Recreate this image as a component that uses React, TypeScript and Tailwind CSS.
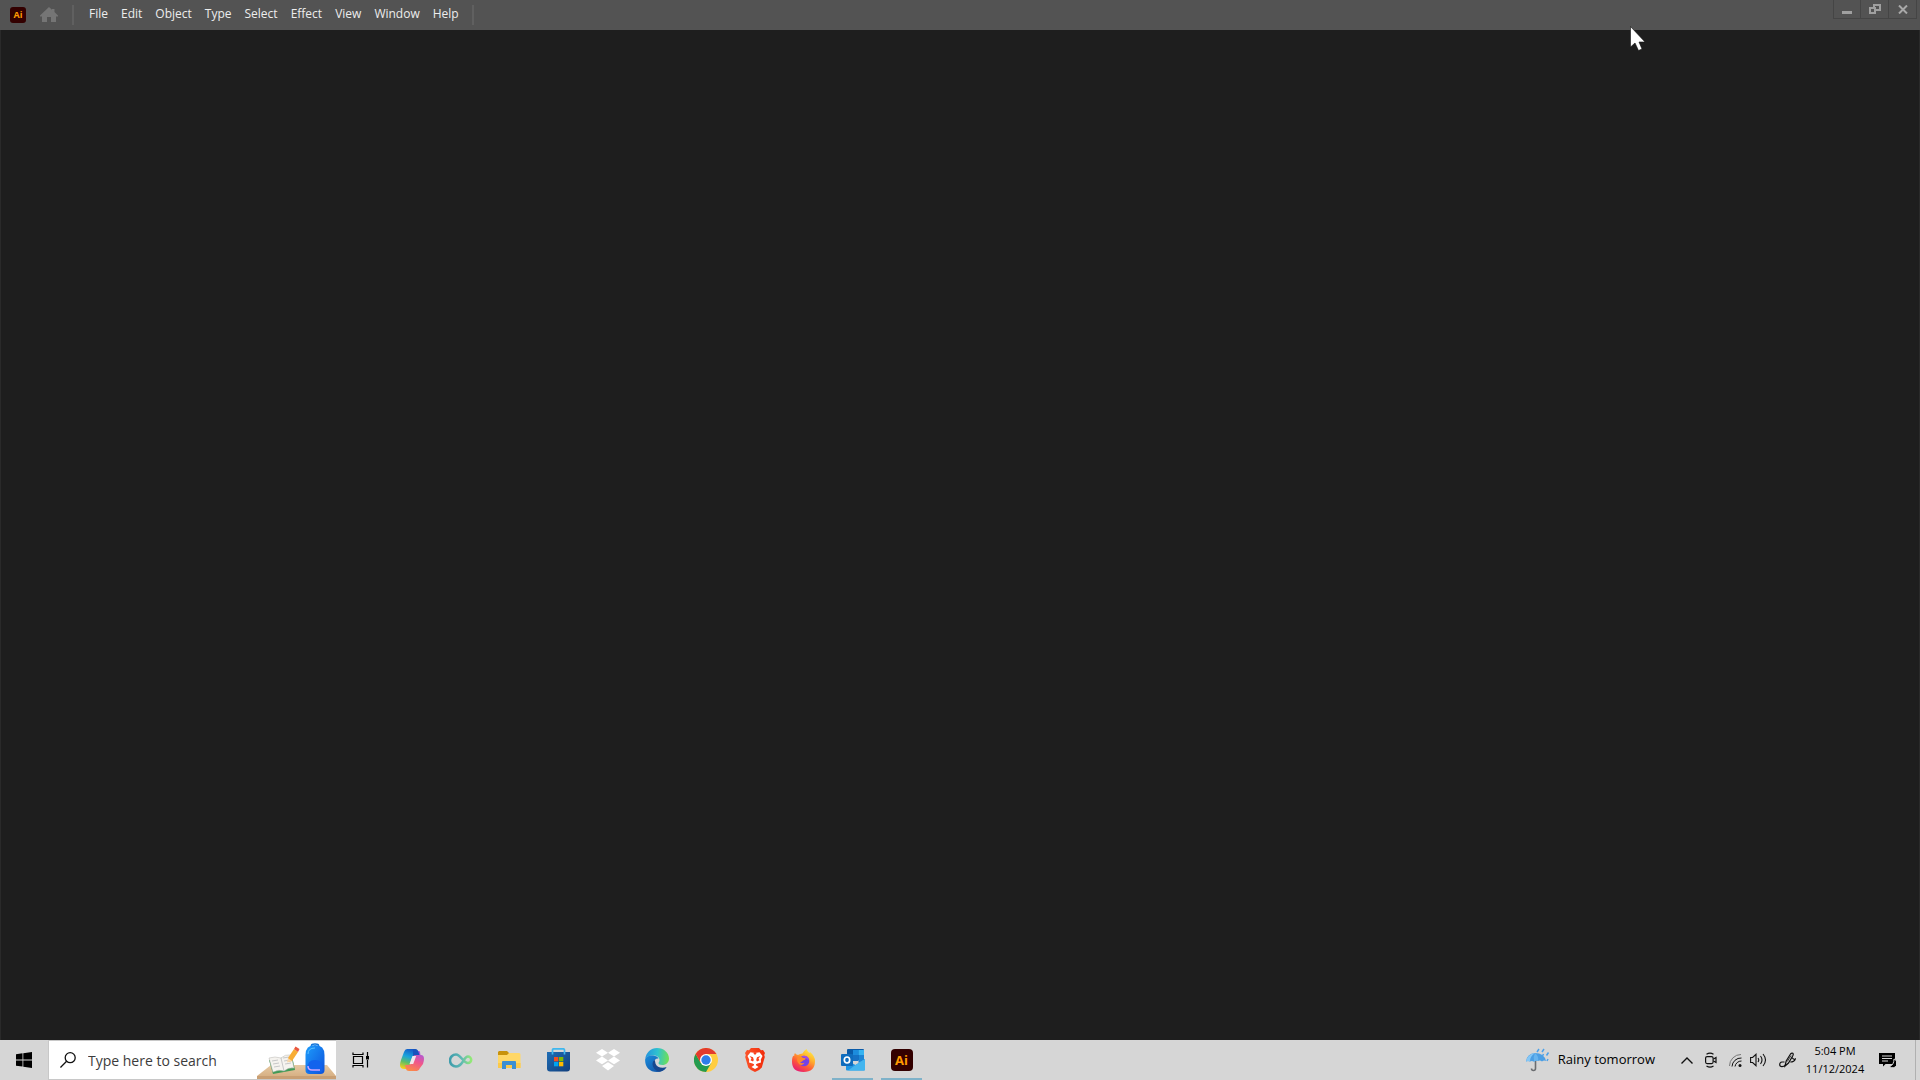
import type { ReactNode } from "react";

const menus = ["File", "Edit", "Object", "Type", "Select", "Effect", "View", "Window", "Help"];

const HomeIcon = () => (
  <svg width="18" height="16" viewBox="0 0 18 16" fill="#757575">
    <path d="M9 0 12 2.700V2h2.500v3L18 8.500v1h-2V15h-5v-5H7v5H2V9.500H0v-1z" />
  </svg>
);

const Pointer = () => (
  <svg width="16" height="25" viewBox="0 0 16 25" className="pointer-events-none absolute top-[26px] left-[1630px]">
    <path d="M.5.5V21L5 17l3.500 7.500L12 23l-3-7h6z" fill="#fff" stroke="#111" strokeWidth=".6" />
  </svg>
);

const WindowsLogo = () => (
  <svg width="16" height="16" viewBox="0 0 16 16">
    <path d="M0 2.200 6.500 1.300V7.500H0zM7.300 1.200 16 0v7.500H7.300zM0 8.400h6.500v6.200L0 13.700zM7.300 8.400H16V16l-8.700-1.300z" />
  </svg>
);

const SearchIcon = () => (
  <svg width="16" height="16" viewBox="0 0 16 16" fill="none" stroke="#111" strokeWidth="1.300">
    <circle cx="10.200" cy="5.700" r="5" />
    <path d="M6.600 9.300.4 15.500" />
  </svg>
);

const SchoolArt = () => (
  <svg width="79" height="38" viewBox="0 0 79 38" className="shrink-0 self-end">
    <defs>
      <linearGradient id="bag" x1="0" y1="0" x2="1" y2="1">
        <stop offset="0" stopColor="#1d9dfc" />
        <stop offset="1" stopColor="#0d52dc" />
      </linearGradient>
      <linearGradient id="desk" x1="0" y1="0" x2="0" y2="1">
        <stop offset="0" stopColor="#e6c9a3" />
        <stop offset="1" stopColor="#d3aa7c" />
      </linearGradient>
    </defs>
    <path d="M14 24h56l9 11v3H0v-3z" fill="url(#desk)" />
    <path d="M0 35h79v3H0z" fill="#c99f73" />
    <path d="m12 19 4 14 22-4-3-14z" fill="#3f9a55" />
    <path d="m12 17 4 14q6-3 11-1 5-4 10-3l-3-13q-6-1-10 3-6-2-12 0z" fill="#f5f3ef" stroke="#b9b7b2" strokeWidth=".5" />
    <path d="m24 17 3 13M15 20l6-1m-5 4 6-1m-5 4 6-1m3-8 6-1m-5 4 6-1m-5 4 6-1" stroke="#b3b5b8" fill="none" strokeWidth=".7" />
    <path d="m31 17 6-9 4 3-6 9-4 1z" fill="#f8ad35" />
    <path d="m31 17-1 4.500 5-1.500z" fill="#f6d7ae" />
    <path d="m37 8 1.500-2.500 4 2.500-1.500 3z" fill="#e9573f" />
    <g transform="translate(0 2)">
      <path d="M54.500 4V2.500Q54.500 1 58 1t3.500 1.500V4" fill="none" stroke="#1273d8" strokeWidth="1.600" />
      <path d="M48.500 12q0-10 9.500-10t9.500 10v15q0 4-4 4h-11q-4 0-4-4z" fill="url(#bag)" />
      <path d="M50.500 25q0-8 7.500-8t7.500 8v2q0 2-2 2h-11q-2 0-2-2z" fill="#1263ed" />
      <path d="M51 23q0 4 4 4h8" stroke="#c9a7ff" fill="none" strokeWidth="1.500" />
      <path d="M51 11q0-6 7-6" stroke="#5cc2ff" fill="none" />
    </g>
  </svg>
);

const TaskViewIcon = () => (
  <svg width="17" height="16" viewBox="0 0 17 16" fill="none" stroke="#000" strokeWidth="1.200">
    <path d="M1.500 4.500h9v7h-9zM1 .5v2h10v-2M1 15.500v-2h10v2M15.500 0v4M15.500 8v7.500" />
    <path d="M14 4h3v3.500h-3z" fill="#000" stroke="none" />
  </svg>
);

const CopilotIcon = () => (
  <svg width="24" height="22" viewBox="0 0 24 22">
    <defs>
      <linearGradient id="cpA" x1=".6" y1="0" x2=".3" y2="1">
        <stop offset="0" stopColor="#1557c7" />
        <stop offset=".4" stopColor="#18a4dc" />
        <stop offset=".7" stopColor="#62bf63" />
        <stop offset="1" stopColor="#f4cf1b" />
      </linearGradient>
      <linearGradient id="cpB" x1=".7" y1="0" x2=".3" y2="1">
        <stop offset="0" stopColor="#a359e4" />
        <stop offset=".5" stopColor="#f0568c" />
        <stop offset="1" stopColor="#fb8a47" />
      </linearGradient>
    </defs>
    <path d="M7 0h8q2.500 0 3.300 2.600L19.500 6H16q-3 0-4 3l-2.500 8q-1 3-3.500 3H4.500Q0 20 0 16q0-2 1-5L4 3Q5 0 7 0z" fill="url(#cpA)" />
    <path d="M17 22H9q-2.500 0-3.300-2.600L5 16h3q3 0 4-3l2.500-8q.8-3 3.500-3 2-.2 2 1l.5 3H21q3 0 3 4 0 2-1 5l-3 4q-1 3-3 3z" fill="url(#cpB)" />
    <path d="M13 0h2q2.500 0 3.300 2.600L19.500 6H16q-2 0-3 1z" fill="#1854bd" />
    <path d="M12.500 7h3.700l-3 8H9.500z" fill="#f1e8ee" />
  </svg>
);

const InfinityIcon = () => (
  <svg width="24" height="15" viewBox="0 0 24 15" fill="none">
    <defs>
      <linearGradient id="inf" x1="0" y1="0" x2="1" y2="0">
        <stop offset="0" stopColor="#3f9dac" />
        <stop offset=".55" stopColor="#5fb9b4" />
        <stop offset="1" stopColor="#93ea75" />
      </linearGradient>
    </defs>
    <path
      d="M14 8.500C11 13 9.500 13.500 7 13.500a6 6 0 1 1 0-12c5 0 7 8.500 12 8.500a3.200 3.200 0 1 0 0-6.400c-2.200 0-3.500 2.400-5 4.900z"
      stroke="url(#inf)"
      strokeWidth="2.500"
    />
  </svg>
);

const FolderIcon = () => (
  <svg width="23" height="18" viewBox="0 0 23 18">
    <path d="M1 0h8l2 2h10v4H0V1z" fill="#c8920b" />
    <path d="M0 4h9l2-2h10q1.500 0 1.500 1.500V17H0z" fill="#ffd766" />
    <path d="M0 12h22.500v5H0z" fill="#fbc94a" />
    <path d="M4 18v-7q0-1 1-1h12q1 0 1 1v7h-4v-4H8v4z" fill="#3b8fd3" />
  </svg>
);

const StoreIcon = () => (
  <svg width="23" height="24" viewBox="0 0 23 24">
    <defs>
      <linearGradient id="store" x1="0" y1="0" x2="1" y2="1">
        <stop offset="0" stopColor="#1e6db5" />
        <stop offset="1" stopColor="#123f7d" />
      </linearGradient>
    </defs>
    <path d="M0 4h23v16.500q0 3-3 3H3q-3 0-3-3z" fill="url(#store)" />
    <path d="M5.500 6.500V2q0-1.200 1.200-1.200h9.600q1.200 0 1.200 1.200v4.500" fill="none" stroke="#3fb7ee" strokeWidth="1.700" />
    <path d="M7 9h4.300v4.300H7z" fill="#f25022" />
    <path d="M12 9h4.300v4.300H12z" fill="#7fba00" />
    <path d="M7 14h4.300v4.300H7z" fill="#00a4ef" />
    <path d="M12 14h4.300v4.300H12z" fill="#ffb900" />
  </svg>
);

const DropboxIcon = () => (
  <svg width="24" height="22" viewBox="0 0 24 22" fill="#fff">
    <path d="m6 0 6 3.700-6 3.900-6-3.900zM18 0l6 3.700-6 3.900-6-3.900zM6 7.600l6 3.800-6 3.800-6-3.800zM18 7.600l6 3.800-6 3.800-6-3.800zM6 17l6-3.800 6 3.800-6 4.500z" />
  </svg>
);

const EdgeIcon = () => (
  <svg width="24" height="24" viewBox="0 0 24 24">
    <defs>
      <linearGradient id="edgeTop" x1="0" y1=".4" x2="1" y2=".5">
        <stop offset="0" stopColor="#2393df" />
        <stop offset=".5" stopColor="#2fc2cf" />
        <stop offset="1" stopColor="#6fe055" />
      </linearGradient>
      <linearGradient id="edgeLow" x1="0" y1="0" x2="1" y2="1">
        <stop offset="0" stopColor="#1a8ddd" />
        <stop offset="1" stopColor="#114a9c" />
      </linearGradient>
    </defs>
    <path d="M.2 11C1 4.500 6 0 12 0c7 0 12 5 12 10.500 0 4-3 6.500-6.500 6.500-3 0-4-1-4-2 0-.7 1-1.200 1-3 0-2.500-2.500-4.500-6-4.500C4 7.500 1 9 .2 11z" fill="url(#edgeTop)" />
    <path d="M.2 11C1 8.500 4.500 7 8 7.500c3 .3 5 1.500 5.500 3C11 10 9 12 9 14.500c0 4 4 6.500 8 6.500 2 0 3-.5 4-1-2 2.500-5.200 4-9 4-8 0-12.500-6-11.800-13z" fill="url(#edgeLow)" />
    <path d="M9.500 12C7.500 13.500 7 16 8 18.500c1.200 3 4 4.500 6 5.200 3-.5 6-2 7.700-4.700-5 2-10 0-11-3-.5-1.500-.5-3-1.200-4z" fill="#17488f" />
  </svg>
);

const ChromeIcon = () => (
  <svg width="24" height="24" viewBox="0 0 24 24">
    <circle cx="12" cy="12" r="12" fill="#ffcd40" />
    <path d="M1.600 6A12 12 0 0 0 12 24l5.200-9L12 12 6.800 15z" fill="#249b4f" />
    <path d="M1.600 6A12 12 0 0 1 22.400 6H12l-5.200 9z" fill="#e33b2e" />
    <circle cx="12" cy="12" r="6" fill="#fff" />
    <circle cx="12" cy="12" r="4.700" fill="#2f7de9" />
  </svg>
);

const BraveIcon = () => (
  <svg width="20" height="24" viewBox="0 0 20 24">
    <defs>
      <linearGradient id="brave" x1="0" y1="0" x2="1" y2="0">
        <stop offset="0" stopColor="#fb542b" />
        <stop offset="1" stopColor="#f22c0b" />
      </linearGradient>
    </defs>
    <path d="M6 0h8l2 2.200 2-.2 2 3-.8 2 .6 2-3 10.500Q15 22 10 24q-5-2-6.800-4.500L.2 9l.6-2L0 5l2-3 2 .2z" fill="url(#brave)" />
    <path d="m10 5 4.500-.8L17.500 8l-1.700 3.500.2 3-3.500 1-1.500.8v1l2.500 1.700L10 21l-3.500-2L9 17.300v-1l-1.500-.8-3.500-1 .2-3L2.500 8l3-3.800z" fill="#fff" />
    <path d="M4.500 8 8 9.300 8.800 12 8 13.500l-2.500-1.300 1-1.700zM15.500 8 12 9.300 11.200 12l.8 1.500 2.500-1.300-1-1.700zM8.200 5h3.600L10 7z" fill="#f9401b" />
  </svg>
);

const FirefoxIcon = () => (
  <svg width="23" height="23" viewBox="0 0 23 23">
    <defs>
      <linearGradient id="fox" x1=".8" y1="0" x2=".2" y2="1">
        <stop offset="0" stopColor="#fff04a" />
        <stop offset=".35" stopColor="#ffb02c" />
        <stop offset=".65" stopColor="#ff5b37" />
        <stop offset="1" stopColor="#e4157a" />
      </linearGradient>
    </defs>
    <path d="M3 4q.5 1.500 3 2 2-1.500 4.500-1.500Q11.500 2 14.500 0q.5 2 3 4l.5-1q5 4 5 9 0 11-11.500 11T0 12.500Q0 8 1.500 6.500q.3.800.7.500Q2 5.500 3 4z" fill="url(#fox)" />
    <circle cx="12" cy="12" r="5.300" fill="#7542e5" />
    <path d="M6 8q2-1.500 4.500.5l3.500 1q-1 1.500-3 2-1 1.500-3 1.500 1.500 2 4.500.8-1.500 3-5 1.700Q5 13.500 5 11q0-2 1-3z" fill="#ff8a2b" />
    <path d="M10 7q5-1.500 7 3l-1 1q-2-2.500-5-3z" fill="#a64be8" />
  </svg>
);

const OutlookIcon = () => (
  <svg width="24" height="22" viewBox="0 0 24 22">
    <path d="M6 1q0-1 1-1h15q1 0 1 1v10H6z" fill="#0a5ba9" />
    <path d="M12 1h5.500v5H12z" fill="#1c8cdd" />
    <path d="M17.500 1H23v5h-5.500z" fill="#36b3f1" />
    <path d="M17.500 6H23v5l-5.500 3z" fill="#1d85d5" />
    <path d="M12 6h5.500v6H12z" fill="#1671c4" />
    <path d="m5 11 9.500 5L24 10v10.500q0 1-1 1H6q-1 0-1-1z" fill="#2196e3" />
    <path d="m24 10-9.500 6L7 21.500h16q1 0 1-1z" fill="#43b5ef" />
    <rect y="5" width="12" height="12" rx="1" fill="#0f6cbd" />
    <ellipse cx="6" cy="11" rx="2.700" ry="3" fill="none" stroke="#fff" strokeWidth="1.700" />
  </svg>
);

const WeatherIcon = () => (
  <svg width="24" height="24" viewBox="0 0 24 24" fill="none">
    <path d="M9.500 12v8.500q0 2-2 2t-2-2" stroke="#6b6d70" strokeWidth="1.600" />
    <path d="M0 13.500Q1 5.500 9 5q9 0 11 8-2-1-4 .5-2-1.500-4-.5-2-1-4 .7-2-1.500-4-.2-2-1-4 0z" fill="#4c9fe4" />
    <path d="M0 13.500Q1 6.500 9 5q-5 3-5 8.500-2-1-4 0z" fill="#85c7f6" />
    <path d="M9 5q4 3 3 8-2-1-4 .7-1-5 1-8.700z" fill="#68b4ee" />
    <path d="m13 1-2 3M18 1l-2 3M22.500 4.500l-2 3M17.500 6l-1 2M22 11l-1 2" stroke="#4aa0ea" strokeWidth="1.500" />
  </svg>
);

const CaretIcon = () => (
  <svg width="12" height="7" viewBox="0 0 12 7" fill="none" stroke="#111" strokeWidth="1.400">
    <path d="m.5 6.500 5.500-5.500 5.500 5.500" />
  </svg>
);

const CameraIcon = () => (
  <svg width="12" height="16" viewBox="0 0 12 16" fill="none" stroke="#111" strokeWidth="1.200">
    <rect x=".6" y="4.600" width="7.500" height="7" rx="1.500" />
    <path d="m8.500 7 2.500-1.500v5L8.500 9M1.500 2.200Q5 0 8.500 2.200M1.500 14q3.500 2.200 7 0" />
  </svg>
);

const WifiIcon = () => (
  <svg width="13" height="13" viewBox="0 0 13 13" fill="none" stroke="#111" strokeWidth="1">
    <path d="M.5 12A11.500 11.500 0 0 1 12 .5" stroke="#777" />
    <path d="M3 12.500a9 9 0 0 1 9.500-8.500M6 12.500A6.500 6.500 0 0 1 12.500 7" />
    <circle cx="11" cy="11.500" r="1.500" fill="#111" stroke="none" />
  </svg>
);

const SoundIcon = () => (
  <svg width="17" height="14" viewBox="0 0 17 14" fill="none" stroke="#111" strokeWidth="1.100">
    <path d="M.6 4.500h2L6 1.300v11.400L2.600 9.500h-2zM8 5q1.500 2 0 4M10.500 3q3 4 0 8M13 1q5 6 0 12" />
  </svg>
);

const PenIcon = () => (
  <svg width="17" height="17" viewBox="0 0 17 17" fill="none" stroke="#111" strokeWidth="1.200">
    <path d="m6 14 1.200-5 4.300-7q1.300-1.500 2.300-.7.900.8 0 2.500L9.500 11z" />
    <path d="M5.500 10H3Q.7 10.300.7 12.500T3 14.700q2 0 3.500-1.500M13 5.500q1.500 2.500 3.300 1.500-1 3-5 3" />
    <path d="m8.300 9.500 3.700-6" strokeWidth=".8" />
  </svg>
);

const NotificationIcon = () => (
  <svg width="17" height="17" viewBox="0 0 17 17">
    <path d="M0 1h16v11H6.500L4 14.500V12H0z" />
    <path d="M3 4h10M3 6.500h10M3 9h6" stroke="#d6d6d6" strokeWidth="1" />
    <path d="M15 7a4.500 4.500 0 1 1-4.500 7.500Q15 13 15 7z" stroke="#d6d6d6" />
  </svg>
);

const AiLogo = ({ large }: { large?: boolean }) => (
  <span
    className={
      large
        ? "flex size-[22px] items-center justify-center rounded bg-[#330000] text-[13px] leading-none font-bold text-[#ff9a00]"
        : "flex size-4 items-center justify-center rounded-[3px] bg-[#330000] text-[9px] leading-none font-bold text-[#ff9a00]"
    }
  >
    Ai
  </span>
);

const apps: { name: string; icon: ReactNode; open?: boolean }[] = [
  { name: "Copilot", icon: <CopilotIcon /> },
  { name: "Connect", icon: <InfinityIcon /> },
  { name: "File Explorer", icon: <FolderIcon /> },
  { name: "Microsoft Store", icon: <StoreIcon /> },
  { name: "Dropbox", icon: <DropboxIcon /> },
  { name: "Edge", icon: <EdgeIcon /> },
  { name: "Chrome", icon: <ChromeIcon /> },
  { name: "Brave", icon: <BraveIcon /> },
  { name: "Firefox", icon: <FirefoxIcon /> },
  { name: "Outlook", icon: <OutlookIcon />, open: true },
  { name: "Illustrator", icon: <AiLogo large />, open: true },
];

const TitleBar = () => (
  <header className="flex h-[30px] items-start bg-[#535353]">
    <div className="flex h-[29px] items-center">
      <div className="pl-[10px]">
        <AiLogo />
      </div>
      <button aria-label="Home" className="ml-[14px] pt-px">
        <HomeIcon />
      </button>
      <div className="ml-[14px] h-5 w-[2px] bg-[#606060]" />
      <nav className="ml-[15px] flex gap-[13px] pb-[2px] text-[12px] leading-4 text-[#ededed]">
        {menus.map((menu) => (
          <button key={menu}>{menu}</button>
        ))}
      </nav>
      <div className="ml-[13px] h-5 w-[2px] bg-[#606060]" />
    </div>
    <div className="mr-[3px] ml-auto flex h-[19px] divide-x divide-[#454545] border border-t-0 border-[#454545]">
      <button aria-label="Minimize" className="flex w-[27px] items-end justify-center pb-1">
        <svg width="10" height="3" viewBox="0 0 10 3">
          <path d="M0 0h10v3H0z" fill="#a0a0a0" />
        </svg>
      </button>
      <button aria-label="Restore" className="flex w-7 items-center justify-center">
        <svg width="12" height="10" viewBox="0 0 12 10" fill="none" stroke="#a0a0a0" strokeWidth="2">
          <path d="M1 4h5v5H1zM5 3V1h6v5H7" />
        </svg>
      </button>
      <button aria-label="Close" className="flex w-[27px] items-center justify-center">
        <svg width="10" height="9" viewBox="0 0 10 9" fill="none" stroke="#a8a8a8" strokeWidth="2">
          <path d="m1 .5 8 8M9 .5l-8 8" />
        </svg>
      </button>
    </div>
  </header>
);

const Taskbar = () => (
  <footer className="flex h-10 items-stretch bg-[#d6d6d6] text-black">
    <button aria-label="Start" className="flex w-12 items-center justify-center">
      <WindowsLogo />
    </button>
    <label className="flex w-[288px] items-center overflow-hidden border-y border-l border-[#c8c8c8] bg-white pl-[11px]">
      <SearchIcon />
      <input
        aria-label="Search"
        placeholder="Type here to search"
        className="ml-3 min-w-0 flex-1 bg-transparent text-[14px] outline-none placeholder:text-[#3c3c3c]"
      />
      <SchoolArt />
    </label>
    <button aria-label="Task View" className="mr-[3px] flex w-12 items-center justify-center">
      <TaskViewIcon />
    </button>
    {apps.map((app) => (
      <button
        key={app.name}
        aria-label={app.name}
        className="relative flex w-[49px] items-center justify-center"
      >
        {app.icon}
        {app.open && <span className="absolute inset-x-1 bottom-0 h-[2px] bg-[#7fb2c9]" />}
      </button>
    ))}
    <button className="ml-auto flex items-center gap-2 text-[13px]">
      <WeatherIcon />
      Rainy tomorrow
    </button>
    <div className="ml-[26px] flex items-center gap-3">
      <button aria-label="Show hidden icons">
        <CaretIcon />
      </button>
      <button aria-label="Meet Now">
        <CameraIcon />
      </button>
      <button aria-label="Network">
        <WifiIcon />
      </button>
      <button aria-label="Volume" className="-ml-1">
        <SoundIcon />
      </button>
      <button aria-label="Pen">
        <PenIcon />
      </button>
    </div>
    <button className="ml-[6px] flex w-[66px] flex-col items-center justify-center text-[11px] leading-[18px]">
      <span>5:04 PM</span>
      <span>11/12/2024</span>
    </button>
    <button aria-label="Notifications" className="ml-[11px] flex w-[37px] items-center border-r border-[#b0b0b0]">
      <NotificationIcon />
    </button>
    <button aria-label="Show desktop" className="w-1" />
  </footer>
);

const App = () => {
  return (
    <div className="relative flex h-screen flex-col overflow-hidden bg-[#1e1e1e] font-['Open_Sans','Noto_Sans',sans-serif]">
      <TitleBar />
      <main className="flex-1 border-x border-[#2a2a2a]" />
      <Taskbar />
      <Pointer />
    </div>
  );
};

export default App;
